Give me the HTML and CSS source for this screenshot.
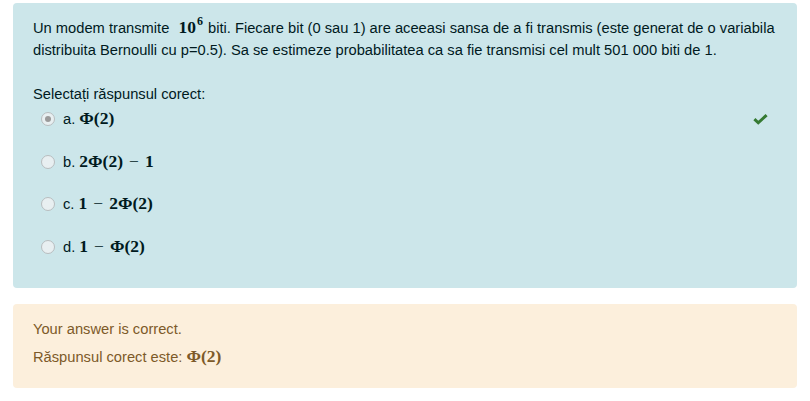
FILE: index.html
```html
<!DOCTYPE html>
<html lang="ro">
<head>
<meta charset="utf-8">
<link rel="stylesheet" href="styles.css">
</head>
<body>
<div class="page">
  <div class="formulation">
    <p class="qtext">Un modem transmite <span class="math m-lead">10<span class="sup">6</span></span> biti. Fiecare bit (0 sau 1) are aceeasi sansa de a fi transmis (este generat de o variabila<br>distribuita Bernoulli cu p=0.5). Sa se estimeze probabilitatea ca sa fie transmisi cel mult 501 000 biti de 1.</p>
    <div class="prompt">Selectați răspunsul corect:</div>
    <div class="answers">
      <div class="answer">
        <span class="radio checked"></span>
        <span class="label">a. <span class="math">Φ(2)</span></span>
        <svg class="tick" viewBox="0 0 16 12" width="15" height="12"><path d="M1.5 6.2 L5.6 10 L14.5 1.8" fill="none" stroke="#357a32" stroke-width="3.2" stroke-linejoin="miter"/></svg>
      </div>
      <div class="answer">
        <span class="radio"></span>
        <span class="label">b. <span class="math">2Φ(2)<span class="op">−</span>1</span></span>
      </div>
      <div class="answer">
        <span class="radio"></span>
        <span class="label">c. <span class="math">1<span class="op">−</span>2Φ(2)</span></span>
      </div>
      <div class="answer">
        <span class="radio"></span>
        <span class="label">d. <span class="math">1<span class="op">−</span>Φ(2)</span></span>
      </div>
    </div>
  </div>
  <div class="outcome">
    <div>Your answer is correct.</div>
    <div>Răspunsul corect este: <span class="math">Φ(2)</span></div>
  </div>
</div>
</body>
</html>
```

FILE: styles.css
```css
* { box-sizing: border-box; }
html, body { margin: 0; padding: 0; background: #ffffff; }
body {
  font-family: "Liberation Sans", Arial, sans-serif;
  font-size: 14.7px;
  line-height: 22px;
}
.page {
  padding: 3px 13px 0 13px;
}
.formulation {
  background: #cce6ea;
  color: #001a1e;
  border-radius: 4px;
  padding: 14px 8px 27px 20px;
  height: 285px;
}
.qtext { margin: 0 0 22px 0; white-space: nowrap; }
.math {
  font-family: "Liberation Serif", "DejaVu Serif", serif;
  font-weight: bold;
  font-size: 17.5px;
  line-height: 20px;
}
.math .op { font-weight: normal; margin: 0 6px; }
.m-lead {
  display: inline-block;
  margin-left: 5px;
  margin-right: 1px;
  line-height: 18px;
}
.m-lead .sup {
  display: inline-block;
  font-size: 12px;
  line-height: 12px;
  vertical-align: top;
  margin-top: -3px;
  margin-left: 1px;
}
.prompt { height: 22px; }
.answers {
  display: flex;
  flex-direction: column;
  gap: 14.5px;
}
.answer {
  height: 28px;
  display: flex;
  align-items: center;
  padding-left: 8px;
}
.radio {
  width: 14px;
  height: 14px;
  border-radius: 50%;
  border: 1.5px solid #b8bdbf;
  background: #e8eff1;
  margin-right: 8px;
  display: flex;
  align-items: center;
  justify-content: center;
}
.radio.checked::after {
  content: "";
  width: 6px;
  height: 6px;
  border-radius: 50%;
  background: #9a9a9a;
}
.label { flex: 1; }
.tick { margin-right: 21px; }
.outcome {
  margin-top: 16px;
  background: #fcefdc;
  color: #7d5a29;
  border-radius: 4px;
  padding: 14px 20px 20px 20px;
  display: flex;
  flex-direction: column;
  gap: 6px;
}
```
